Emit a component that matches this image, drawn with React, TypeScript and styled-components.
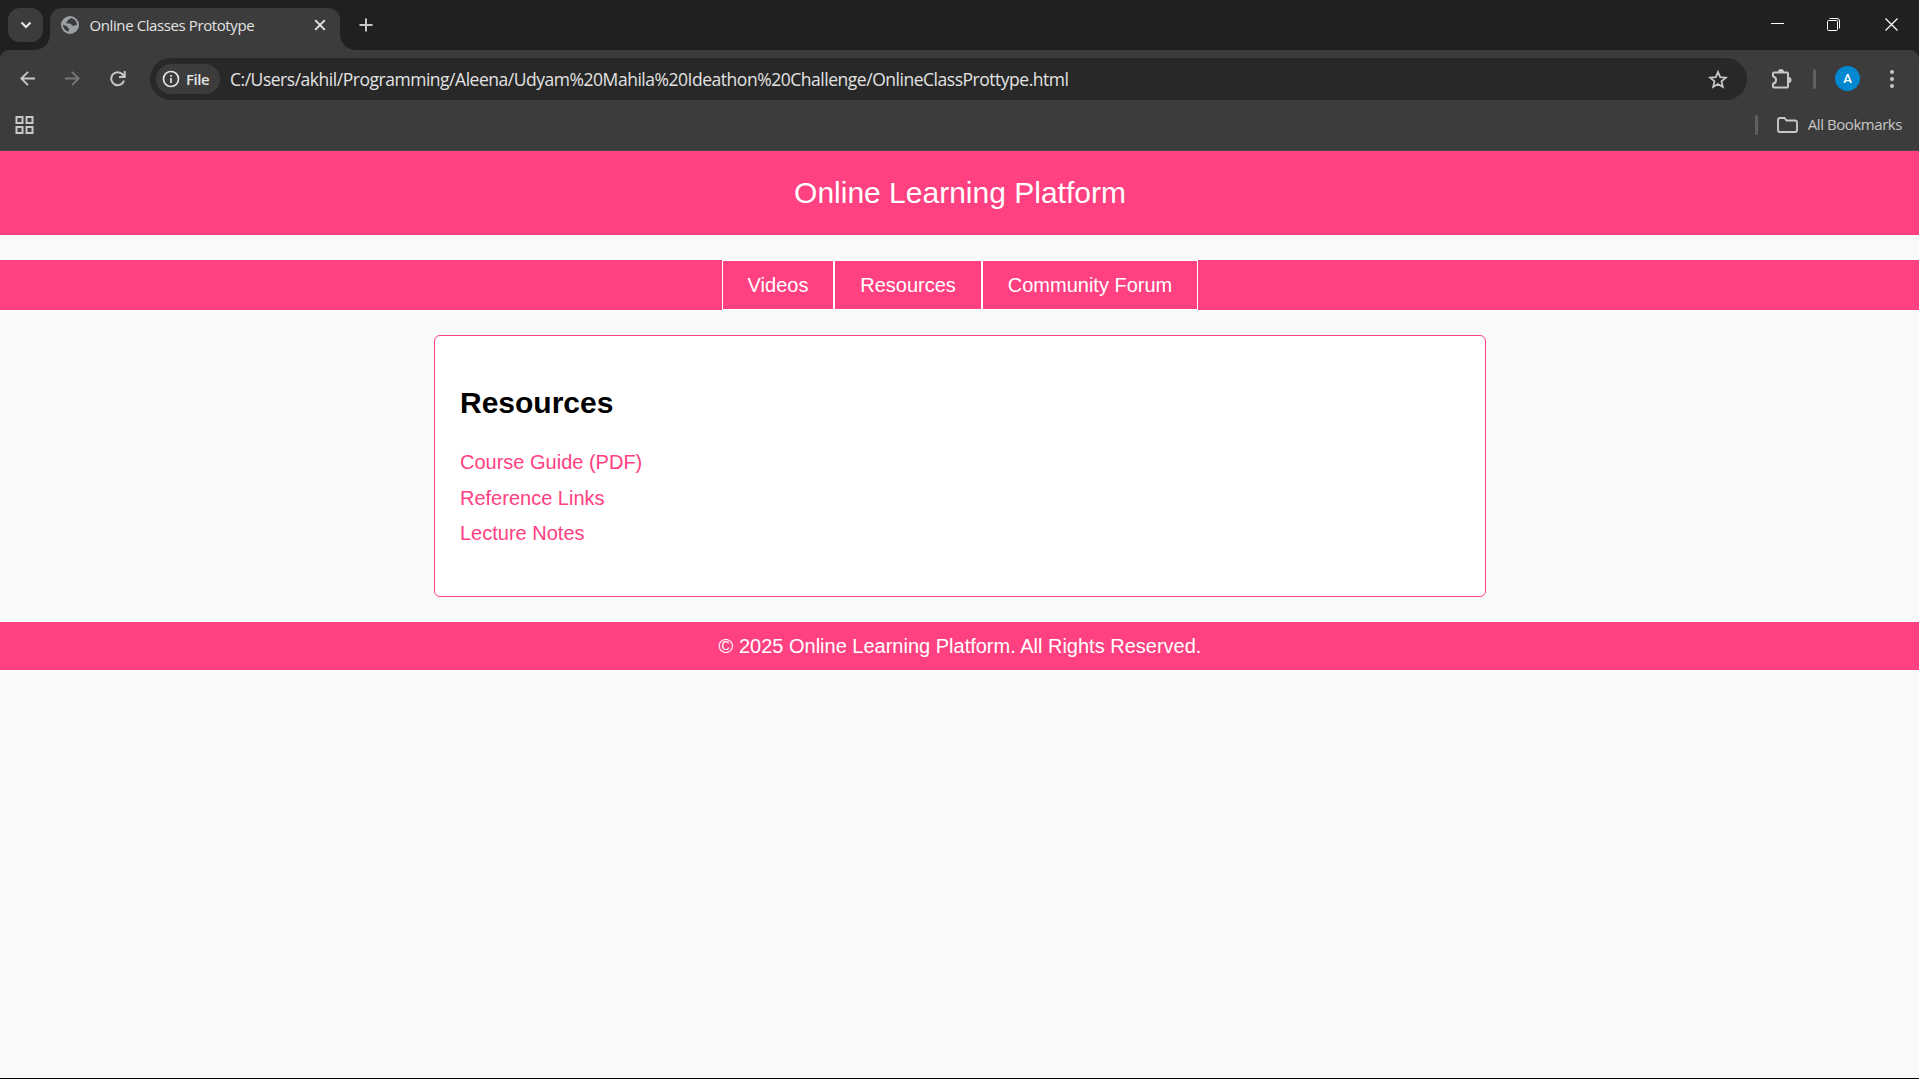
import React from 'react';
import styled, { createGlobalStyle } from 'styled-components';

const ui = `'Open Sans', 'Noto Sans', sans-serif`;
const pink = '#ff4081';

const Global = createGlobalStyle`
  * { box-sizing: border-box; }
  html, body { margin: 0; padding: 0; }
  body { overflow: hidden; background: #f8f9fb; font-family: Arial, 'Liberation Sans', sans-serif; }
`;

const Window = styled.div`
  display: flex;
  flex-direction: column;
  height: 1079px;
  background: #f8f9fb;
  border-bottom: 1px solid #000;
`;

const Chrome = styled.header`
  background: #1f2120;
  font-family: ${ui};
`;

const TabStrip = styled.div`
  display: flex;
  height: 50px;
  padding: 8px 0 0 8px;
  align-items: flex-start;
`;

const TabSearch = styled.button`
  display: flex;
  align-items: center;
  justify-content: center;
  width: 35px;
  height: 34px;
  padding: 0;
  border: 0;
  border-radius: 12px;
  background: #3c3c3c;
`;

const Tab = styled.div`
  position: relative;
  display: flex;
  align-items: center;
  width: 290px;
  height: 42px;
  margin-left: 7px;
  padding: 0 12px 8px 11px;
  border-radius: 12px 12px 0 0;
  background: #3c3c3c;
  &::before, &::after {
    content: '';
    position: absolute;
    bottom: 0;
    width: 15px;
    height: 15px;
  }
  &::before { right: 100%; background: radial-gradient(circle at 0 0, transparent 14.5px, #3c3c3c 15px); }
  &::after { left: 100%; background: radial-gradient(circle at 100% 0, transparent 14.5px, #3c3c3c 15px); }
`;

const TabTitle = styled.span`
  flex: 1;
  margin-left: 10.5px;
  color: #e3e3e3;
  font-size: 15px;
  line-height: 20px;
  letter-spacing: -0.4px;
  white-space: nowrap;
`;

const IconButton = styled.button<{ $w: number; $h?: number }>`
  display: flex;
  flex: none;
  align-items: center;
  justify-content: center;
  width: ${p => p.$w}px;
  height: ${p => p.$h ?? 34}px;
  padding: 0;
  border: 0;
  background: none;
`;

const WindowButtons = styled.div`
  display: flex;
  margin-left: auto;
`;

const Toolbar = styled.div`
  display: flex;
  align-items: center;
  height: 58px;
  padding: 0 0 1px 5px;
  border-radius: 9px 9px 0 0;
  background: #3c3c3c;
`;

const Omnibox = styled.div`
  display: flex;
  flex: none;
  align-items: center;
  width: 1597px;
  height: 42px;
  margin: 1px 0 0 10px;
  padding: 0 8px 0 6px;
  border-radius: 21px;
  background: #282828;
`;

const Chip = styled.div`
  display: flex;
  align-items: center;
  gap: 6px;
  width: 64px;
  height: 30px;
  padding-left: 6px;
  border-radius: 15px;
  background: #3c3c3c;
  color: #e3e3e3;
  font-size: 15px;
  font-weight: 600;
  line-height: 20px;
  letter-spacing: -0.45px;
`;

const Url = styled.span`
  flex: 1;
  margin-left: 10px;
  color: #e3e3e3;
  font-size: 17.5px;
  line-height: 24px;
  letter-spacing: -0.473px;
  white-space: nowrap;
`;

const Divider = styled.i<{ $ml: number }>`
  flex: none;
  width: 3px;
  height: 20px;
  margin-left: ${p => p.$ml}px;
  border-radius: 1.5px;
  background: #5f5f5f;
`;

const Avatar = styled.div`
  display: flex;
  flex: none;
  align-items: center;
  justify-content: center;
  width: 25px;
  height: 25px;
  margin: 0 5px 0 19px;
  border-radius: 50%;
  background: #0288d1;
  color: #fff;
  font: 500 13px Roboto, sans-serif;
`;

const BookmarkBar = styled.div`
  display: flex;
  align-items: center;
  height: 43px;
  padding: 0 17px 8px 15px;
  border-bottom: 1px solid #484848;
  background: #3c3c3c;
`;

const AllBookmarks = styled.div`
  display: flex;
  align-items: center;
  margin-left: auto;
  color: #c7c7c7;
  font-size: 15px;
  line-height: 20px;
  letter-spacing: -0.44px;
  white-space: nowrap;
  i { margin: 0 19px 0 0; }
  svg { margin-right: 10px; }
  span { padding-bottom: 2px; }
`;

const Banner = styled.div`
  padding: 25px 0 25px 1px;
  height: 84px;
  background: ${pink};
  color: #fff;
  font-size: 30px;
  line-height: 34px;
  text-align: center;
`;

const Nav = styled.nav`
  display: flex;
  justify-content: center;
  margin: 25px 0;
  height: 50px;
  background: ${pink};
`;

const NavButton = styled.button<{ $w: number }>`
  width: ${p => p.$w}px;
  padding: 0 0 0 1px;
  border: 1px solid #fff;
  background: ${pink};
  color: #fff;
  font: 20px/23px Arial, 'Liberation Sans', sans-serif;
`;

const Card = styled.main`
  width: 1052px;
  height: 262px;
  margin: 0 auto 25px;
  padding: 25px 25px 25px 25.5px;
  border: 1px solid ${pink};
  border-radius: 6px;
  background: #fff;
`;

const Heading = styled.h2`
  margin: 25px 0 31px;
  font-size: 30px;
  line-height: 34px;
`;

const LinkList = styled.ul`
  display: flex;
  flex-direction: column;
  gap: 12.5px;
  margin: 0;
  padding: 0;
  list-style: none;
`;

const ResourceLink = styled.a`
  display: block;
  color: ${pink};
  font-size: 20px;
  line-height: 23px;
  text-decoration: none;
`;

const Footer = styled.footer`
  height: 48px;
  padding: 13px 0 12px 1px;
  background: ${pink};
  color: #fff;
  font-size: 20px;
  line-height: 23px;
  text-align: center;
`;

const stroke = { fill: 'none', stroke: '#c7c7c7', strokeWidth: 2 };

const Globe = () => (
  <svg width="18" height="18" viewBox="0 0 18 18">
    <circle cx="9" cy="9" r="9" fill="#9aa0a6" />
    <path d="M10.2 1.9C9 3.2 7.2 2.8 7 4.4c-.1 1.1-1.8.8-1.8 2.2 0 1.5 2.9.7 4.3 1.1 1.3.4 1 2.1 2.3 2.1 1.600 0 2.300-.9 4.100-.6A7.100 7.100 0 0 0 10.200 1.900zM2 8.400c1.500 1.600 4.500.8 4.500 2.600 0 1.300 1.600 1 1.600 2.300 0 1.200-.8 1.500-.6 2.500A7.100 7.100 0 0 1 2 8.400z" fill="#3c3c3c" />
  </svg>
);

export default function App() {
  return (
    <Window>
      <Global />
      <Chrome>
        <TabStrip>
          <TabSearch>
            <svg width="12" height="8" viewBox="0 0 12 8"><path d="M1.500 1.500 6 6l4.500-4.500" {...stroke} stroke="#e3e3e3" strokeWidth={2.200} /></svg>
          </TabSearch>
          <Tab>
            <Globe />
            <TabTitle>Online Classes Prototype</TabTitle>
            <IconButton $w={16}>
              <svg width="12" height="12" viewBox="0 0 12 12"><path d="m1.200 1.200 9.600 9.600m0-9.600-9.600 9.600" {...stroke} stroke="#e3e3e3" strokeWidth={1.900} /></svg>
            </IconButton>
          </Tab>
          <IconButton $w={52}>
            <svg width="14" height="14" viewBox="0 0 14 14"><path d="M7 .5v13M.5 7h13" {...stroke} /></svg>
          </IconButton>
          <WindowButtons>
            <IconButton $w={51} $h={33}>
              <svg width="13" height="13" viewBox="0 0 13 13"><path d="M0 5.500h13" {...stroke} stroke="#fff" strokeWidth={1} /></svg>
            </IconButton>
            <IconButton $w={61} $h={33}>
              <svg width="13" height="13" viewBox="0 0 13 13" fill="none" stroke="#fff"><rect x=".5" y="2.500" width="10" height="10" rx="1" /><path d="M2.500.500h7.500a2.500 2.500 0 0 1 2.500 2.500v7.500" /></svg>
            </IconButton>
            <IconButton $w={55} $h={33}>
              <svg width="13" height="13" viewBox="0 0 13 13"><path d="m.5.500 12 12m0-12-12 12" {...stroke} stroke="#fff" strokeWidth={1.200} /></svg>
            </IconButton>
          </WindowButtons>
        </TabStrip>
        <Toolbar>
          <IconButton $w={45}>
            <svg width="15" height="15" viewBox="0 0 15 15"><path d="M15 7.500H1.500M8 .8 1.300 7.500 8 14.200" {...stroke} strokeWidth={1.900} /></svg>
          </IconButton>
          <IconButton $w={45}>
            <svg width="15" height="15" viewBox="0 0 15 15"><path d="M0 7.500h13.500M7 .8l6.700 6.700L7 14.200" {...stroke} stroke="#777" strokeWidth={1.900} /></svg>
          </IconButton>
          <IconButton $w={45}>
            <svg width="16" height="16" viewBox="0 0 16 16"><path d="M14 9.500A6.500 6.500 0 1 1 12.700 3.500L14.500 5.500M14.700 0v6H9" {...stroke} /></svg>
          </IconButton>
          <Omnibox>
            <Chip>
              <svg width="18" height="18" viewBox="0 0 18 18"><circle cx="9" cy="9" r="7.500" {...stroke} stroke="#e3e3e3" strokeWidth={1.700} /><path d="M9 8v5M9 5v1.800" {...stroke} stroke="#e3e3e3" strokeWidth={1.700} /></svg>
              File
            </Chip>
            <Url>C:/Users/akhil/Programming/Aleena/Udyam%20Mahila%20Ideathon%20Challenge/OnlineClassProttype.html</Url>
            <IconButton $w={43}>
              <svg width="20" height="19" viewBox="0 0 20 19"><path d="m10 2 2.200 5.200 5.600.5-4.300 3.700 1.300 5.500-4.800-2.900-4.800 2.900 1.300-5.500-4.300-3.700 5.600-.5z" {...stroke} strokeWidth={1.800} /></svg>
            </IconButton>
          </Omnibox>
          <IconButton $w={69}>
            <svg width="21" height="21" viewBox="0 0 21 21">
              <path d="M2 8.200V5.500q0-1 1-1H16q1 0 1 1V18.500q0 1-1 1H3q-1 0-1-1V15.800a3.900 3.900 0 0 0 0-7.600z" {...stroke} />
              <path d="M7 4a3 3 0 0 1 6 0zM17.500 9a3 3 0 0 1 0 6z" fill="#c7c7c7" />
            </svg>
          </IconButton>
          <Divider $ml={-3} />
          <Avatar>A</Avatar>
          <IconButton $w={54}>
            <svg width="4" height="18" viewBox="0 0 4 18" fill="#c7c7c7"><circle cx="2" cy="2" r="2" /><circle cx="2" cy="9" r="2" /><circle cx="2" cy="16" r="2" /></svg>
          </IconButton>
        </Toolbar>
        <BookmarkBar>
          <svg width="19" height="18" viewBox="-.5 0 19 18"><path d="M1 1h6v6H1zM11 1h6v6h-6zM1 11h6v6H1zM11 11h6v6h-6z" {...stroke} /></svg>
          <AllBookmarks>
            <Divider $ml={0} />
            <svg width="21" height="16" viewBox="0 0 21 16"><path d="M1 13V3q0-2 2-2h4.500l2 2.500H18q2 0 2 2V13q0 2-2 2H3q-2 0-2-2z" {...stroke} strokeWidth={1.900} /></svg>
            <span>All Bookmarks</span>
          </AllBookmarks>
        </BookmarkBar>
      </Chrome>
      <Banner>Online Learning Platform</Banner>
      <Nav>
        <NavButton $w={112}>Videos</NavButton>
        <NavButton $w={148}>Resources</NavButton>
        <NavButton $w={216}>Community Forum</NavButton>
      </Nav>
      <Card>
        <Heading>Resources</Heading>
        <LinkList>
          <li><ResourceLink>Course Guide (PDF)</ResourceLink></li>
          <li><ResourceLink>Reference Links</ResourceLink></li>
          <li><ResourceLink>Lecture Notes</ResourceLink></li>
        </LinkList>
      </Card>
      <Footer>© 2025 Online Learning Platform. All Rights Reserved.</Footer>
    </Window>
  );
}
